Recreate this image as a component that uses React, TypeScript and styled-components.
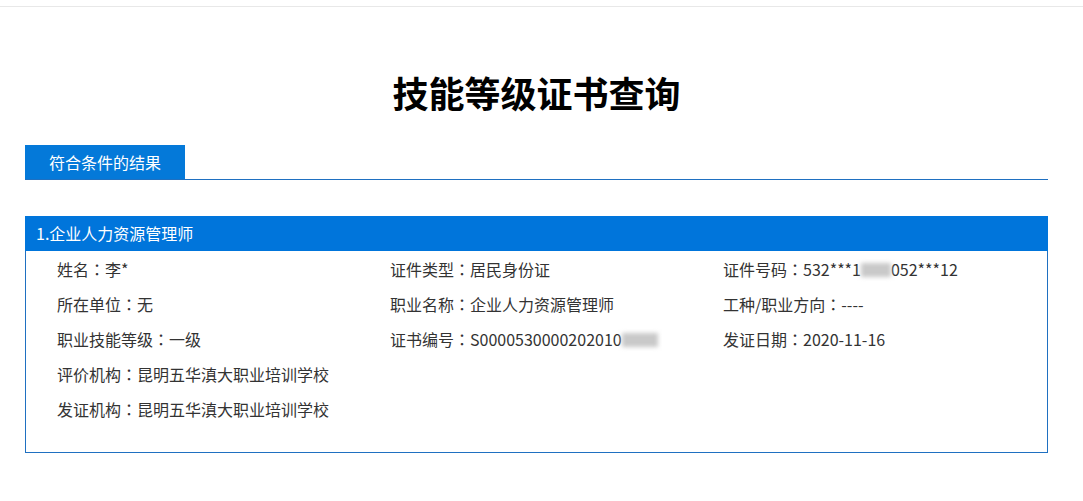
import React from 'react';
import styled, { createGlobalStyle } from 'styled-components';

const GlobalStyle = createGlobalStyle`
  html, body {
    margin: 0;
    padding: 0;
    background: #fff;
  }
  body {
    font-family: "Noto Sans CJK SC", "Microsoft YaHei", sans-serif;
    color: #333;
  }
`;

const TopBar = styled.div`
  height: 6px;
  border-bottom: 1px solid #e8e8e8;
`;

const Container = styled.main`
  width: 1023px;
  margin: 0 0 0 25px;
`;

const Title = styled.h1`
  margin: 0;
  padding-top: 54px;
  height: 78px;
  text-align: center;
  font-size: 36px;
  font-weight: 700;
  line-height: 62px;
  color: #000;
`;

const TabBar = styled.div`
  display: flex;
  border-bottom: 1px solid #1f70c1;
  margin-top: 6px;
`;

const Tab = styled.div`
  width: 160px;
  height: 34px;
  background: #0479d9;
  color: #fff;
  font-size: 16px;
  line-height: 34px;
  text-align: center;
`;

const Card = styled.section`
  margin-top: 36px;
  border: 1px solid #1f70c1;
`;

const CardHeader = styled.div`
  height: 35px;
  margin: -1px -1px 0;
  padding-left: 11px;
  background: #0075db;
  color: #fff;
  font-size: 16px;
  line-height: 35px;
`;

const CardBody = styled.div`
  display: grid;
  grid-template-columns: 333px 333px 1fr;
  padding: 1px 0 25px 31px;
`;

const Field = styled.div<{ $span?: boolean }>`
  height: 35px;
  line-height: 35px;
  font-size: 16px;
  color: #333;
  white-space: nowrap;
  grid-column: ${({ $span }) => ($span ? '1 / -1' : 'auto')};
`;

// centred full-width colon, as in the original YaHei rendering
const Colon = styled.span`
  font-family: "Noto Sans CJK TC", sans-serif;
`;

const Masked = styled.span<{ $w: number }>`
  display: inline-block;
  width: ${({ $w }) => $w}px;
  height: 14px;
  vertical-align: -1px;
  background: #c9c9c9;
  filter: blur(2px);
`;

const Item = ({ label, children, span }: { label: string; children: React.ReactNode; span?: boolean }) => (
  <Field $span={span}>
    {label}
    <Colon>：</Colon>
    {children}
  </Field>
);

const App = () => {
  return (
    <>
      <GlobalStyle />
      <TopBar />
      <Container>
        <Title>技能等级证书查询</Title>
        <TabBar>
          <Tab>符合条件的结果</Tab>
        </TabBar>
        <Card>
          <CardHeader>1.企业人力资源管理师</CardHeader>
          <CardBody>
            <Item label="姓名">李*</Item>
            <Item label="证件类型">居民身份证</Item>
            <Item label="证件号码">
              532***1<Masked $w={30} />052***12
            </Item>
            <Item label="所在单位">无</Item>
            <Item label="职业名称">企业人力资源管理师</Item>
            <Item label="工种/职业方向">----</Item>
            <Item label="职业技能等级">一级</Item>
            <Item label="证书编号">
              S0000530000202010<Masked $w={36} />
            </Item>
            <Item label="发证日期">2020-11-16</Item>
            <Item label="评价机构" span>昆明五华滇大职业培训学校</Item>
            <Item label="发证机构" span>昆明五华滇大职业培训学校</Item>
          </CardBody>
        </Card>
      </Container>
    </>
  );
};

export default App;
